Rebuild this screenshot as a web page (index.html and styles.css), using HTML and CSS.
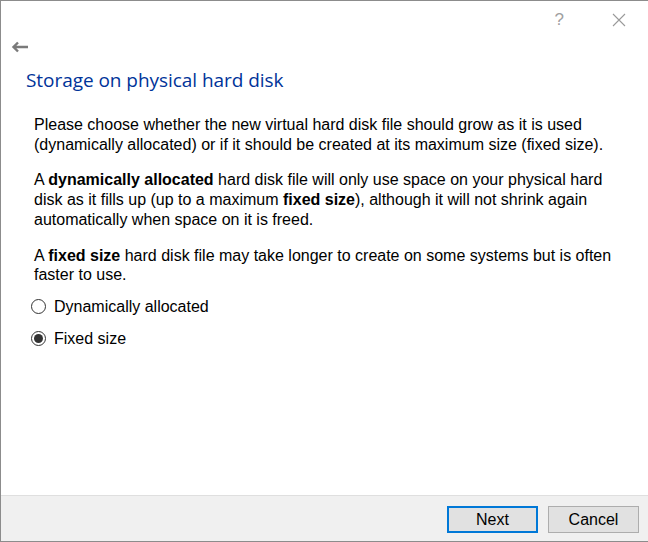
FILE: index.html
```html
<!DOCTYPE html>
<html>
<head>
<meta charset="utf-8">
<link rel="stylesheet" href="styles.css">
</head>
<body>
<div class="window">
  <div class="main">
    <div class="titlebar">
      <span class="help">?</span>
      <svg class="close" width="14" height="14" viewBox="0 0 14 14"><path d="M1 1L13 13M13 1L1 13" stroke="#9a9a9a" stroke-width="1.1" fill="none"/></svg>
    </div>
    <div class="backrow">
      <svg width="18" height="12" viewBox="0 0 18 12"><path d="M3 6H17M7 1.5L2.5 6L7 10.5" stroke="#7a7a7a" stroke-width="2.4" fill="none"/></svg>
    </div>
    <h1 class="heading">Storage on physical hard disk</h1>
    <div class="body">
      <p>Please choose whether the new virtual hard disk file should grow as it is used (dynamically allocated) or if it should be created at its maximum size (fixed size).</p>
      <p>A <b>dynamically allocated</b> hard disk file will only use space on your physical hard disk as it fills up (up to a maximum <b>fixed size</b>), although it will not shrink again automatically when space on it is freed.</p>
      <p>A <b>fixed size</b> hard disk file may take longer to create on some systems but is often faster to use.</p>
      <div class="options">
        <label class="opt"><span class="radio"></span>Dynamically allocated</label>
        <label class="opt"><span class="radio on"></span>Fixed size</label>
      </div>
    </div>
  </div>
  <div class="footer">
    <button class="btn default">Next</button>
    <button class="btn">Cancel</button>
  </div>
</div>
</body>
</html>
```
FILE: styles.css
```css
html, body { margin: 0; padding: 0; background: #fff; }
body { font-family: "Liberation Sans", Arial, sans-serif; color: #000; }
.window {
  width: 648px; height: 542px; box-sizing: border-box;
  border-left: 1px solid #8c8c8c; border-top: 1px solid #8c8c8c; border-bottom: 1px solid #8c8c8c;
  display: flex; flex-direction: column; background: #fff;
}
.main { flex: 1; display: flex; flex-direction: column; }
.titlebar { height: 37px; display: flex; align-items: center; justify-content: flex-end; gap: 48px; padding-right: 22px; }
.help { font-family: "Liberation Sans", sans-serif; font-size: 17px; color: #a0a0a0; margin-top: 1px; }
.close { margin-top: 1px; }
.backrow { height: 18px; padding-left: 10px; display: flex; align-items: center; }
.heading { margin: 11px 0 0 25px; font-family: "Open Sans", sans-serif; font-weight: 400; font-size: 19px; color: #003399; line-height: 26px; letter-spacing: -0.05px; }
.body { padding: 0 0 0 33px; font-size: 16px; line-height: 19.7px; margin-top: 22px; }
.body p { margin: 0 0 16px 0; width: 588px; }
.options { display: flex; flex-direction: column; gap: 12px; margin-top: -4px; }
.opt { display: flex; align-items: center; height: 20px; }
.radio { width: 13px; height: 13px; border: 1px solid #333; border-radius: 50%; margin: 0 8px 0 -3px; box-sizing: content-box; display: inline-flex; align-items: center; justify-content: center; background: #fff; }
.radio.on::after { content: ""; width: 9px; height: 9px; border-radius: 50%; background: #333; }
.footer { height: 46px; border-top: 1px solid #dfdfdf; background: #f0f0f0; display: flex; justify-content: flex-end; align-items: flex-start; gap: 10px; padding: 10px 9px 0 0; box-sizing: border-box; }
.btn { width: 91px; height: 27px; background: #e1e1e1; border: 1px solid #adadad; font-family: "Liberation Sans", sans-serif; font-size: 16px; color: #000; padding: 0; }
.btn.default { border: 2px solid #0078d7; }
```
